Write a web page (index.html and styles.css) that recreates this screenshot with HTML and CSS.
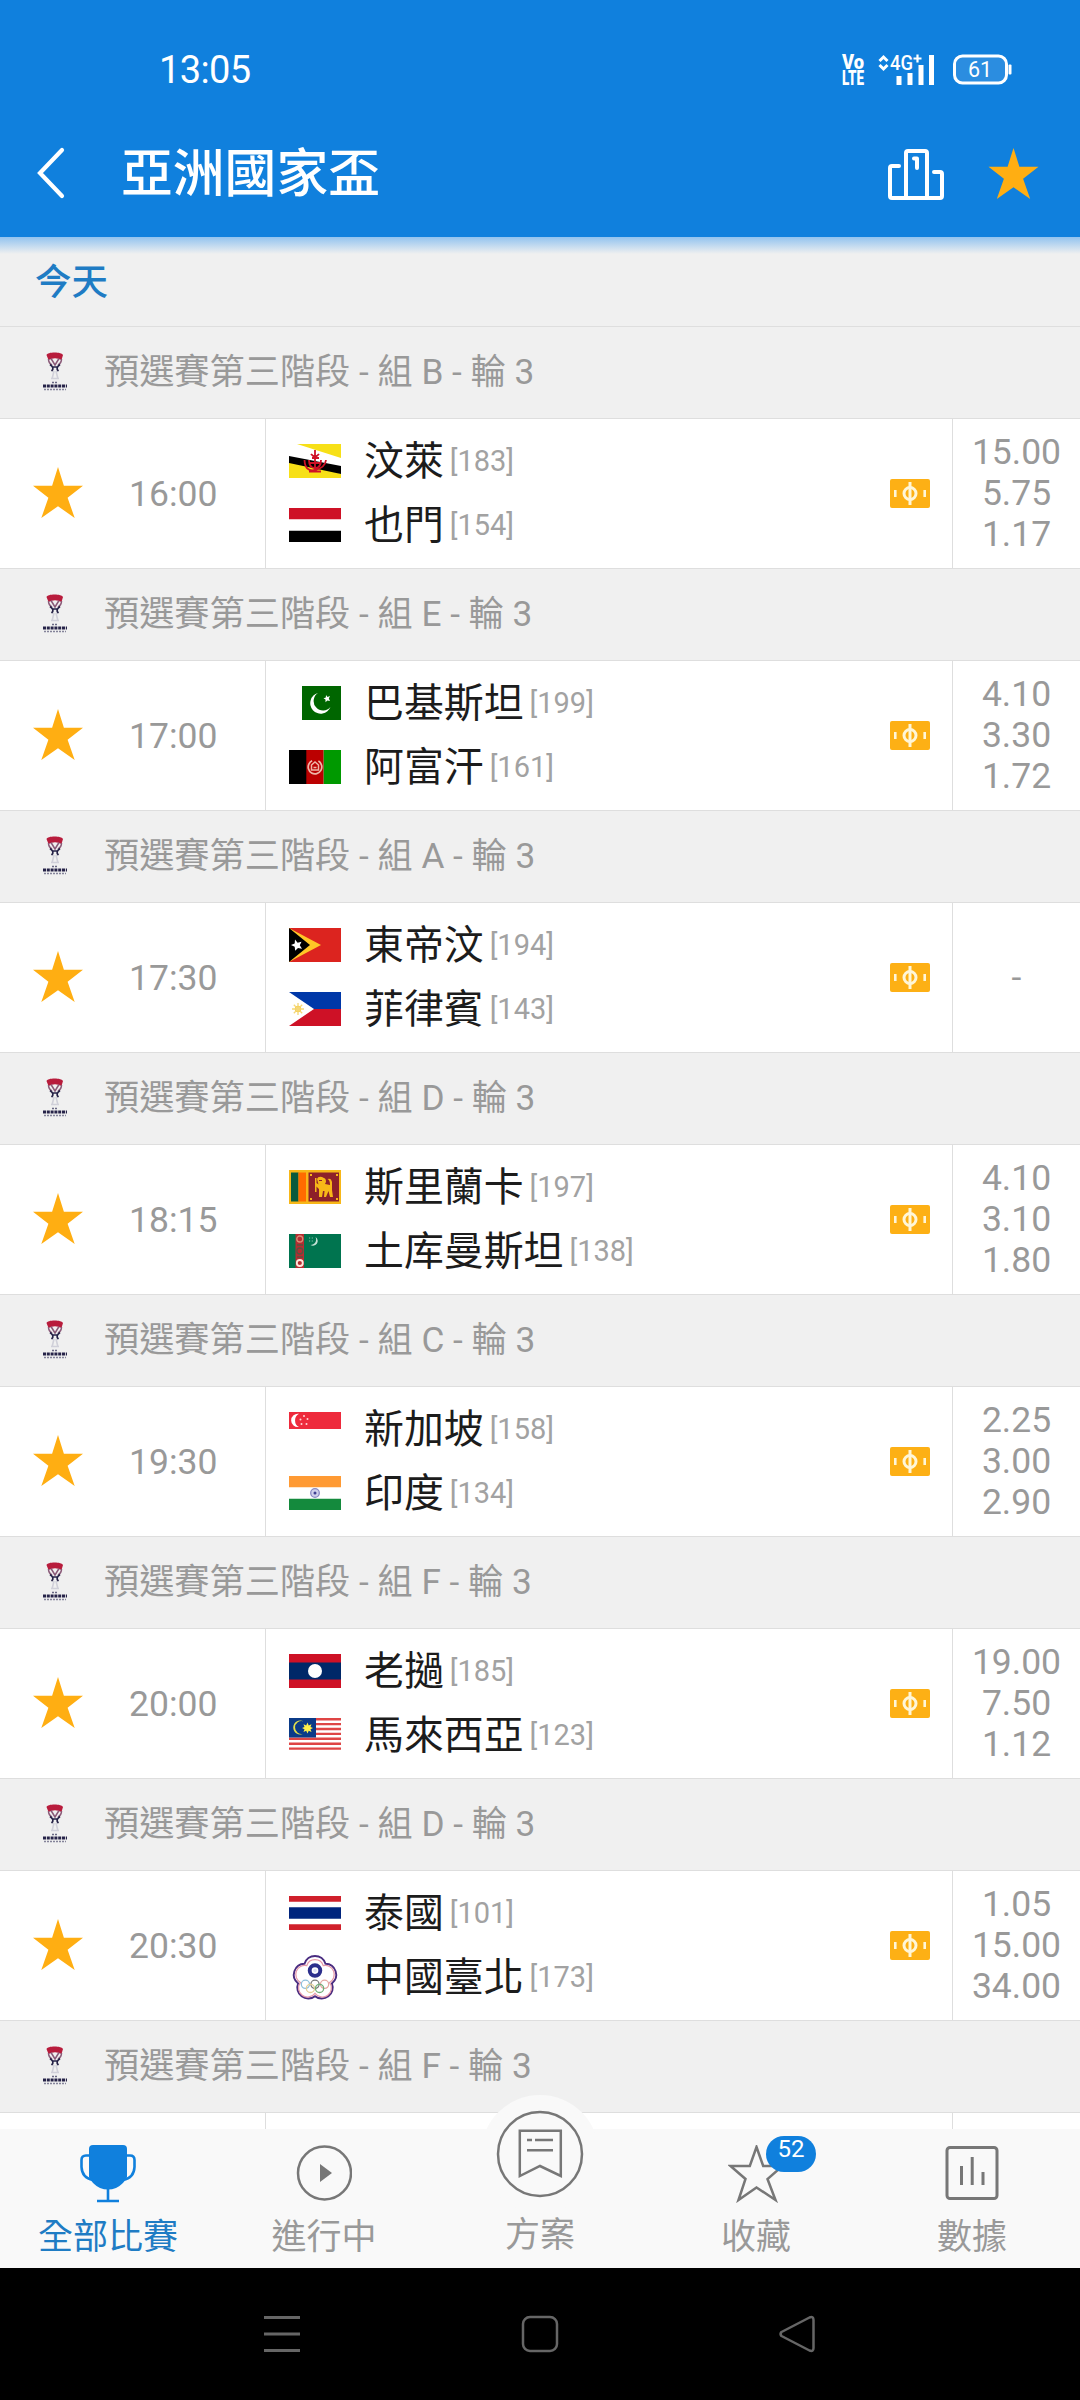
FILE: index.html
```html
<!DOCTYPE html>
<html lang="zh-Hant">
<head>
<meta charset="utf-8">
<title>亞洲國家盃</title>
<link rel="stylesheet" href="styles.css">
</head>
<body>
<svg class="defs" width="0" height="0">
  <symbol id="star" viewBox="0 0 50 51"><path fill="#ffae12" d="M25 0L30.9 18.7H50L34.6 30.8L41.7 51L25 39.2L8.300 51L15.400 30.8L0 18.700H19.100Z"/></symbol>
  <symbol id="cup" viewBox="0 0 26 42">
    <path fill="#b81c3c" d="M4.500 4C5 .5 20 .5 21 4L19.500 9Q13 5.500 6.500 9Z"/>
    <path fill="none" stroke="#8a5a78" stroke-width="1.500" d="M6.500 8Q6.500 12 10 14M19.500 8Q19.500 12 16 14M9 7.500L13 14L17 7.500"/>
    <path fill="none" stroke="#262348" stroke-width="1.700" d="M8 13.500Q13 17 9.500 20M18 13.500Q13 17 16.500 20M10 16H16"/>
    <path fill="none" stroke="#d0d0d9" stroke-width="1.600" d="M12 20L10 28M14 20L16 28M9 27.500H17"/>
    <path stroke="#6a6984" stroke-width="1.300" stroke-dasharray="2 1" d="M10 31.500H16"/>
    <path stroke="#262348" stroke-width="3" stroke-dasharray="3 .8" d="M1 35H25"/>
    <path stroke="#85849a" stroke-width="1.500" stroke-dasharray="2 1" d="M2 38.500H24"/>
  </symbol>
  <symbol id="pitch" viewBox="0 0 40 29">
    <rect width="40" height="29" rx="2" fill="#fdb015"/>
    <g fill="none" stroke="#fff6d8"><circle cx="20" cy="14.500" r="6" stroke-width="3"/><path stroke-width="3" d="M20 3V26"/><path stroke-width="2.600" d="M5.300 11V18M34.700 11V18"/></g>
  </symbol>
  <symbol id="bn" viewBox="0 0 52 34">
    <path fill="#f7e017" d="M0 0H52V34H0Z"/><path fill="#fff" d="M0 0V13L52 30V14L8 0Z"/><path d="M0 12V19L52 30V22Z"/>
    <g fill="none" stroke="#cf1126" stroke-width="1.800"><path d="M26 6V28M22 10Q26 15 30 10M20 16Q20 24 26 24T32 16M15.500 16Q16 28 26 26T37 16M20 27.500H32M23 14H30M21 19H31"/></g>
  </symbol>
  <symbol id="ye" viewBox="0 0 52 34"><path fill="#fff" d="M0 0H52V34H0Z"/><path fill="#ce1126" d="M0 0H52V11.300H0Z"/><path d="M0 22.700H52V34H0Z"/></symbol>
  <symbol id="pk" viewBox="0 0 52 34"><path fill="#060" d="M13 0H52V34H13Z"/><path fill="#fff" d="M29 7A10.500 10.500 0 1 0 41.500 21A9.500 9.500 0 1 1 29 7ZM37 9L38.500 11L41 10L39.800 12.500L41 15L38.300 14.500L36.500 16.300V13.500L34.500 12.300L36.800 11.400Z"/></symbol>
  <symbol id="af" viewBox="0 0 52 34"><path d="M0 0H18V34H0Z"/><path fill="#b00" d="M17.300 0H34.700V34H17.300Z"/><path fill="#009900" d="M34.700 0H52V34H34.700Z"/><g fill="none" stroke="#eeb6a8"><circle cx="26" cy="17" r="6.800" stroke-width="1.700" stroke-dasharray="36 7" transform="rotate(-60 26 17)"/><path stroke-width="1.500" d="M22.500 20V15L26 12L29.500 15V20ZM24.500 17.500H27.500"/></g></symbol>
  <symbol id="tl" viewBox="0 0 52 34"><path fill="#dc241f" d="M0 0H52V34H0Z"/><path fill="#ffc726" d="M0 0L32 17L0 34Z"/><path d="M0 0L21 17L0 34Z"/><path fill="#fff" d="M6 11.500L8.600 14.800L12.500 13.800L10.800 17.300L13 20.700L9 20L6.200 22.800L5.700 18.800L2 17L5.700 15.400Z"/></symbol>
  <symbol id="ph" viewBox="0 0 52 34"><path fill="#0038a8" d="M0 0H52V17H0Z"/><path fill="#ce1126" d="M0 17H52V34H0Z"/><path fill="#fff" d="M0 0L25 17L0 34Z"/><circle cx="9" cy="17" r="3.200" fill="#f5c93a"/><path stroke="#f5d777" stroke-width="1.300" d="M9 11V23M3 17H15M4.800 12.800L13.200 21.200M4.800 21.200L13.200 12.800"/></symbol>
  <symbol id="lk" viewBox="0 0 52 34"><path fill="#f7b718" d="M0 0H52V34H0Z"/><path fill="#0a5a3c" d="M2 2.500H9.500V31.500H2Z"/><path fill="#ff6b00" d="M9.500 2.500H17V31.500H9.500Z"/><path fill="#8d2029" d="M19.500 2.500H50V31.500H19.500Z"/><path fill="#f7b718" d="M28 9Q29 6 33 7L36 8.500Q38 11 36 14L41 15Q41 10 38.500 9Q42 7.500 43 12V20L44 27H41L39.500 21L37 27H35L35.500 21H34L33 27H30V19L27.500 16.500V22H26V8H27.500V13L29.500 14.500Z"/><path fill="#f7b718" d="M21 4H23V6H21ZM47 4H49V6H47ZM21 28H23V30H21ZM47 28H49V30H47Z"/><path stroke="#8d2029" d="M30 10.500H33"/></symbol>
  <symbol id="tm" viewBox="0 0 52 34"><path fill="#00744f" d="M0 0H52V34H0Z"/><path fill="#b62d32" d="M6.500 0H15V34H6.500Z"/><g fill="none" stroke="#d98d76" stroke-width="1.300"><circle cx="10.800" cy="5" r="3"/><circle cx="10.800" cy="17" r="3" stroke="#5d5240"/><circle cx="10.800" cy="29" r="3" stroke="#ffe7dc" stroke-width="1.800"/><path stroke="#5d5240" d="M8 11H14M8 23H14"/></g><path fill="#c4e2d6" d="M26.500 3A4.700 4.700 0 0 1 21.500 11A5.500 5.500 0 0 0 26.500 3Z"/><path stroke="#7fc2a8" stroke-width="1.200" stroke-dasharray="1.200 1.500" d="M20 4H25M20 7H25"/></symbol>
  <symbol id="sg" viewBox="0 0 52 34"><path fill="#fff" d="M0 0H52V34H0Z"/><path fill="#ee2a3c" d="M0 0H52V17H0Z"/><path fill="#fff" d="M10 1.800A6.700 6.700 0 1 0 10 15A7.500 7.500 0 0 1 10 1.800Z"/><g fill="#ffd5d8"><circle cx="15" cy="4" r="1"/><circle cx="11.500" cy="7.500" r="1"/><circle cx="18.500" cy="7" r="1"/><circle cx="12.500" cy="12" r="1"/><circle cx="17.500" cy="12" r="1"/></g></symbol>
  <symbol id="in" viewBox="0 0 52 34"><path fill="#fff" d="M0 0H52V34H0Z"/><path fill="#ff9a33" d="M0 0H52V11.300H0Z"/><path fill="#148a3d" d="M0 22.700H52V34H0Z"/><circle cx="26" cy="17" r="4.300" fill="#cfd0ea" stroke="#8a8ac4" stroke-width="1.300"/><circle cx="26" cy="17" r="1.500" fill="#3f3f91"/></symbol>
  <symbol id="la" viewBox="0 0 52 34"><path fill="#ce1126" d="M0 0H52V34H0Z"/><path fill="#002868" d="M0 8.500H52V25.500H0Z"/><circle cx="26" cy="17" r="7" fill="#fff"/></symbol>
  <symbol id="my" viewBox="0 0 52 34"><path fill="#fff" d="M0 0H52V34H0Z"/><path stroke="#df4545" stroke-width="2.400" d="M0 1.200H52M0 6.100H52M0 11H52M0 15.900H52M0 20.800H52M0 25.700H52M0 30.600H52"/><path fill="#0b3b88" d="M0 0H27V19.500H0Z"/><path fill="#e3e04a" d="M14.500 3.300A7 7 0 1 0 14.500 15.700A6.500 6.500 0 1 1 14.500 3.300Z"/><path fill="#fff04a" d="M18.500 4.500L19.700 7.500L22.500 6.200L21.500 9L24 10L21.500 11.200L22.500 14L19.700 12.800L18.500 15.500L17.200 12.800L14.500 14L15.500 11.200L13 10L15.500 9L14.500 6.200L17.200 7.500Z"/></symbol>
  <symbol id="th" viewBox="0 0 52 34"><path fill="#fff" d="M0 0H52V34H0Z"/><path fill="#d0202b" d="M0 0H52V5.700H0ZM0 28.300H52V34H0Z"/><path fill="#00247d" d="M0 11.300H52V22.700H0Z"/></symbol>
  <symbol id="tpe" viewBox="-2.5 -1.5 57 57">
    <path fill="#fff" stroke="#4a2c80" stroke-width="2.100" d="M14.500 11A12 12 0 0 1 37.500 11A12 12 0 0 1 44.500 32.500A12 12 0 0 1 26 46.500A12 12 0 0 1 7.500 32.500A12 12 0 0 1 14.500 11Z" transform="translate(0 1.500)"/>
    <path fill="none" stroke="#e79aaa" stroke-width="1.400" d="M17 13A9.500 9.500 0 0 1 35 13A10 10 0 0 1 42 31.500A10 10 0 0 1 26 43.500A10 10 0 0 1 10 31.500A10 10 0 0 1 17 13Z" transform="translate(0 1.500)"/>
    <circle cx="26" cy="20" r="5.800" fill="#fff" stroke="#2c2f8c" stroke-width="4.300"/><circle cx="26" cy="20" r="2" fill="#dfe2f5"/>
    <g fill="none" stroke-width="1.400"><circle cx="15.500" cy="35" r="4.500" stroke="#8fc0dc"/><circle cx="26" cy="35" r="4.500" stroke="#777"/><circle cx="36.500" cy="35" r="4.500" stroke="#e6a6a0"/><circle cx="21" cy="39.500" r="4.500" stroke="#e3cf96"/><circle cx="31" cy="39.500" r="4.500" stroke="#6fae78"/></g>
  </symbol>
</svg>

<div class="app">
  <header class="top">
    <div class="status">
      <span class="clock">13:05</span>
      <div class="signals">
        <svg class="volte" width="24" height="34" viewBox="0 0 24 34" fill="#fff" font-family="Roboto" font-weight="900" font-size="19.500"><text x="1" y="16" textLength="22" lengthAdjust="spacingAndGlyphs">Vo</text><text x="1" y="31.500" textLength="22" lengthAdjust="spacingAndGlyphs">LTE</text></svg>
        <svg class="cell" width="60" height="34" viewBox="0 0 60 34" fill="#fff">
          <path fill="none" stroke="#fff" stroke-width="3" d="M1.500 8L5.500 4L9.500 8M1.500 12L5.500 16L9.500 12"/>
          <text x="12" y="17" font-family="Roboto" font-weight="500" font-size="20.500" textLength="23" lengthAdjust="spacingAndGlyphs">4G</text>
          <path stroke="#fff" stroke-width="2.200" d="M35.500 5.500H43.500M39.500 1.500V9.500"/>
          <path d="M18.500 23h5v9h-5zM29.500 20h5v12h-5zM40.500 12h5v20h-5zM51 2h5v30h-5z"/>
        </svg>
        <svg width="60" height="34" viewBox="0 0 60 34" fill="#fff">
          <rect x="2.500" y="3" width="52" height="27" rx="8" fill="#2b8de0" stroke="#fff" stroke-width="3"/>
          <rect x="56.500" y="11.500" width="3" height="10" rx="1"/>
          <text x="28" y="24" text-anchor="middle" font-family="Roboto" font-size="21.500">61</text>
        </svg>
      </div>
    </div>
    <div class="bar">
      <svg class="back" width="30" height="52" viewBox="0 0 30 52"><path fill="none" stroke="#fff" stroke-width="4.200" stroke-linecap="round" d="M26 3L4 26L26 49"/></svg>
      <h1>亞洲國家盃</h1>
      <svg class="podium" width="56" height="52" viewBox="0 0 56 52" fill="none" stroke="#fff" stroke-width="4" stroke-linecap="round" stroke-linejoin="round"><path d="M11 18H4Q2 18 2 20V48Q2 50 4 50H52Q54 50 54 48V26Q54 24 52 24H46M18 49V5Q18 3 20 3H37Q39 3 39 5V49"/><path d="M26 10.500H29V20"/></svg>
      <svg class="fav" width="51" height="51"><use href="#star"/></svg>
    </div>
  </header>

  <main class="list">
    <h2 class="today">今天</h2>

    <div class="stage"><svg><use href="#cup"/></svg>預選賽第三階段 - 組 B - 輪 3</div>
    <div class="match">
      <div class="when"><svg><use href="#star"/></svg>16:00</div>
      <div class="teams"><p><svg><use href="#bn"/></svg>汶萊<small>[183]</small></p><p><svg><use href="#ye"/></svg>也門<small>[154]</small></p></div>
      <svg class="pitch"><use href="#pitch"/></svg>
      <div class="odds"><span>15.00</span><span>5.75</span><span>1.17</span></div>
    </div>

    <div class="stage"><svg><use href="#cup"/></svg>預選賽第三階段 - 組 E - 輪 3</div>
    <div class="match">
      <div class="when"><svg><use href="#star"/></svg>17:00</div>
      <div class="teams"><p><svg><use href="#pk"/></svg>巴基斯坦<small>[199]</small></p><p><svg><use href="#af"/></svg>阿富汗<small>[161]</small></p></div>
      <svg class="pitch"><use href="#pitch"/></svg>
      <div class="odds"><span>4.10</span><span>3.30</span><span>1.72</span></div>
    </div>

    <div class="stage"><svg><use href="#cup"/></svg>預選賽第三階段 - 組 A - 輪 3</div>
    <div class="match">
      <div class="when"><svg><use href="#star"/></svg>17:30</div>
      <div class="teams"><p><svg><use href="#tl"/></svg>東帝汶<small>[194]</small></p><p><svg><use href="#ph"/></svg>菲律賓<small>[143]</small></p></div>
      <svg class="pitch"><use href="#pitch"/></svg>
      <div class="odds"><span>-</span></div>
    </div>

    <div class="stage"><svg><use href="#cup"/></svg>預選賽第三階段 - 組 D - 輪 3</div>
    <div class="match">
      <div class="when"><svg><use href="#star"/></svg>18:15</div>
      <div class="teams"><p><svg><use href="#lk"/></svg>斯里蘭卡<small>[197]</small></p><p><svg><use href="#tm"/></svg>土库曼斯坦<small>[138]</small></p></div>
      <svg class="pitch"><use href="#pitch"/></svg>
      <div class="odds"><span>4.10</span><span>3.10</span><span>1.80</span></div>
    </div>

    <div class="stage"><svg><use href="#cup"/></svg>預選賽第三階段 - 組 C - 輪 3</div>
    <div class="match">
      <div class="when"><svg><use href="#star"/></svg>19:30</div>
      <div class="teams"><p><svg><use href="#sg"/></svg>新加坡<small>[158]</small></p><p><svg><use href="#in"/></svg>印度<small>[134]</small></p></div>
      <svg class="pitch"><use href="#pitch"/></svg>
      <div class="odds"><span>2.25</span><span>3.00</span><span>2.90</span></div>
    </div>

    <div class="stage"><svg><use href="#cup"/></svg>預選賽第三階段 - 組 F - 輪 3</div>
    <div class="match">
      <div class="when"><svg><use href="#star"/></svg>20:00</div>
      <div class="teams"><p><svg><use href="#la"/></svg>老撾<small>[185]</small></p><p><svg><use href="#my"/></svg>馬來西亞<small>[123]</small></p></div>
      <svg class="pitch"><use href="#pitch"/></svg>
      <div class="odds"><span>19.00</span><span>7.50</span><span>1.12</span></div>
    </div>

    <div class="stage"><svg><use href="#cup"/></svg>預選賽第三階段 - 組 D - 輪 3</div>
    <div class="match">
      <div class="when"><svg><use href="#star"/></svg>20:30</div>
      <div class="teams"><p><svg><use href="#th"/></svg>泰國<small>[101]</small></p><p><svg class="emblem"><use href="#tpe"/></svg>中國臺北<small>[173]</small></p></div>
      <svg class="pitch"><use href="#pitch"/></svg>
      <div class="odds"><span>1.05</span><span>15.00</span><span>34.00</span></div>
    </div>

    <div class="stage"><svg><use href="#cup"/></svg>預選賽第三階段 - 組 F - 輪 3</div>
    <div class="match">
      <div class="when"></div>
      <div class="teams"></div>
      <div class="odds"></div>
    </div>
  </main>

  <nav class="tabs">
    <a class="tab active">
      <svg width="56" height="58" viewBox="0 0 56 58"><path fill="#1080dd" d="M13 0H43Q47 0 47 4V32Q44 39 36 43Q28 46 20 43Q12 39 9 32V4Q9 0 13 0Z"/><path fill="none" stroke="#1080dd" stroke-width="2.600" d="M10 10.500H6Q1.500 10.500 1.500 15V22Q2 33 13 35M46 10.500H50Q54.500 10.500 54.500 15V22Q54 33 43 35M28 43V56M17 56H39"/></svg>
      <span>全部比賽</span>
    </a>
    <a class="tab">
      <svg width="56" height="58" viewBox="0 0 56 58"><circle cx="28.500" cy="28" r="26.500" fill="none" stroke="#777" stroke-width="2.500"/><path fill="#777" d="M24 19L36 28L24 37Z"/></svg>
      <span>進行中</span>
    </a>
    <a class="tab plan">
      <svg class="bump" width="118" height="118" viewBox="0 0 118 118"><circle cx="59" cy="59" r="59" fill="#f9f9f9"/><g fill="none" stroke="#777" stroke-width="2.500"><circle cx="59" cy="59" r="42"/><path d="M38.800 35.800H79.800V81L59 71L38.800 81Z"/><path d="M46 45H51M54 45H72M46 55.200H72"/></g></svg>
      <span>方案</span>
    </a>
    <a class="tab">
      <svg width="56" height="58" viewBox="0 0 56 58"><path fill="none" stroke="#777" stroke-width="2.500" d="M28.500 2L35.200 21H54.500L39.500 34L47.500 55L28.500 42.500L10.500 55L17.500 34L2.500 21H21.800Z"/></svg>
      <b class="badge">52</b>
      <span>收藏</span>
    </a>
    <a class="tab">
      <svg width="56" height="58" viewBox="0 0 56 58"><g fill="none" stroke="#777"><rect x="3" y="2.500" width="50" height="51" rx="3" stroke-width="3"/><path stroke-width="3" d="M17.500 21V40M28.200 12V40M39 27V40"/></g></svg>
      <span>數據</span>
    </a>
  </nav>

  <footer class="keys">
    <svg width="38" height="38" viewBox="0 0 38 38"><path stroke="#666" stroke-width="3" d="M0 2.500H36M0 19H36M0 35.500H36"/></svg>
    <svg width="38" height="38" viewBox="0 0 38 38"><rect x="2" y="2" width="34" height="34" rx="7" fill="none" stroke="#666" stroke-width="2.500"/></svg>
    <svg width="38" height="38" viewBox="0 0 38 38"><path fill="none" stroke="#666" stroke-width="2.500" stroke-linejoin="round" d="M3.500 17Q1.500 19 3.500 21L31.500 35.500Q35.500 37 35.500 33V5Q35.500 1 31.500 2.500Z"/></svg>
  </footer>
</div>
</body>
</html>
```
FILE: styles.css
```css
* { box-sizing: border-box; }
body {
  margin: 0;
  font-family: Roboto, "Noto Sans CJK TC", sans-serif;
  color: #999;
}
h1, h2, p { margin: 0; }
svg { display: block; flex: none; }
.defs { position: absolute; }

.app {
  width: 1080px;
  height: 2400px;
  display: flex;
  flex-direction: column;
  overflow: hidden;
  background: #fff;
}

/* header */
.top {
  height: 237px;
  flex: none;
  background: #1080dd;
  color: #fff;
}
.status {
  height: 109px;
  padding: 30px 68px 0 159px;
  display: flex;
  align-items: center;
  justify-content: space-between;
}
.clock { font-size: 38px; letter-spacing: -0.6px; line-height: 44px; }
.signals { display: flex; }
.volte { margin-right: 13px; overflow: visible; }
.cell { margin-right: 14px; overflow: visible; }
.bar {
  height: 128px;
  padding: 0 41px 0 36px;
  display: flex;
  align-items: center;
}
.bar h1 {
  margin: 3px 0 0 55px;
  font-size: 51.8px;
  font-weight: 500;
  line-height: 70px;
}
.podium { margin: 2px 0 0 auto; }
.fav { margin-left: 44px; }

/* match list */
.list {
  position: relative;
  height: 1892px;
  flex: none;
  overflow: hidden;
}
.list::before {
  content: "";
  position: absolute;
  inset: 0 0 auto;
  height: 17px;
  background: linear-gradient(#92c3ef, #f0f0f000);
}
.today {
  height: 89px;
  padding-left: 35px;
  background: #f0f0f0;
  color: #1f7cc4;
  font-size: 36.5px;
  font-weight: 500;
  line-height: 91px;
}
.stage {
  height: 92px;
  display: flex;
  align-items: center;
  padding: 0 0 8px 42px;
  background: #f0f0f0;
  border-top: 1px solid #dedede;
  font-size: 35.2px;
  white-space: pre;
}
.stage svg { width: 26px; height: 42px; margin: 6px 36px 0 0; }
.match {
  height: 150px;
  display: flex;
  align-items: center;
  border-top: 1px solid #dedede;
  font-size: 35.5px;
}
.when {
  width: 265px;
  display: flex;
  align-items: center;
}
.when svg { width: 50px; height: 51px; margin: -2px 46px 0 33px; }
.teams {
  align-self: stretch;
  flex: 1;
  display: flex;
  flex-direction: column;
  justify-content: center;
  padding-left: 23px;
  border-left: 1px solid #dedede;
}
.teams p {
  height: 64px;
  display: flex;
  align-items: center;
  color: #1c1c1c;
  font-size: 39.9px;
  line-height: 64px;
}
.teams svg { width: 52px; height: 34px; margin: -2px 23px 0 0; }
.teams .emblem { height: 52px; }
.teams small { margin: -2px 0 0 6px; color: #a2a2a2; font-size: 29px; }
.pitch { width: 40px; height: 29px; margin-right: 22px; }
.odds {
  align-self: stretch;
  width: 128px;
  display: flex;
  flex-direction: column;
  justify-content: center;
  align-items: center;
  border-left: 1px solid #dedede;
  line-height: 41px;
}

/* tab bar */
.tabs {
  position: relative;
  height: 139px;
  flex: none;
  display: flex;
  background: #f9f9f9;
}
.tab {
  position: relative;
  width: 216px;
  padding-top: 16px;
  display: flex;
  flex-direction: column;
  align-items: center;
  font-size: 35px;
  line-height: 40px;
}
.tab span { margin-top: 15px; }
.active { color: #1f7cc4; }
.plan { justify-content: flex-end; padding-bottom: 12px; }
.bump { position: absolute; top: -34px; left: 49px; }
.plan span { position: relative; }
.badge {
  position: absolute;
  left: 118px;
  top: 7px;
  width: 50px;
  height: 36px;
  border-radius: 18px;
  background: #1080dd;
  color: #fff;
  font-size: 24px;
  font-weight: 400;
  line-height: 27px;
  text-align: center;
}

/* system navigation */
.keys {
  flex: 1;
  padding: 47px 264px 0;
  display: flex;
  align-items: flex-start;
  justify-content: space-between;
  background: #000;
}
```
